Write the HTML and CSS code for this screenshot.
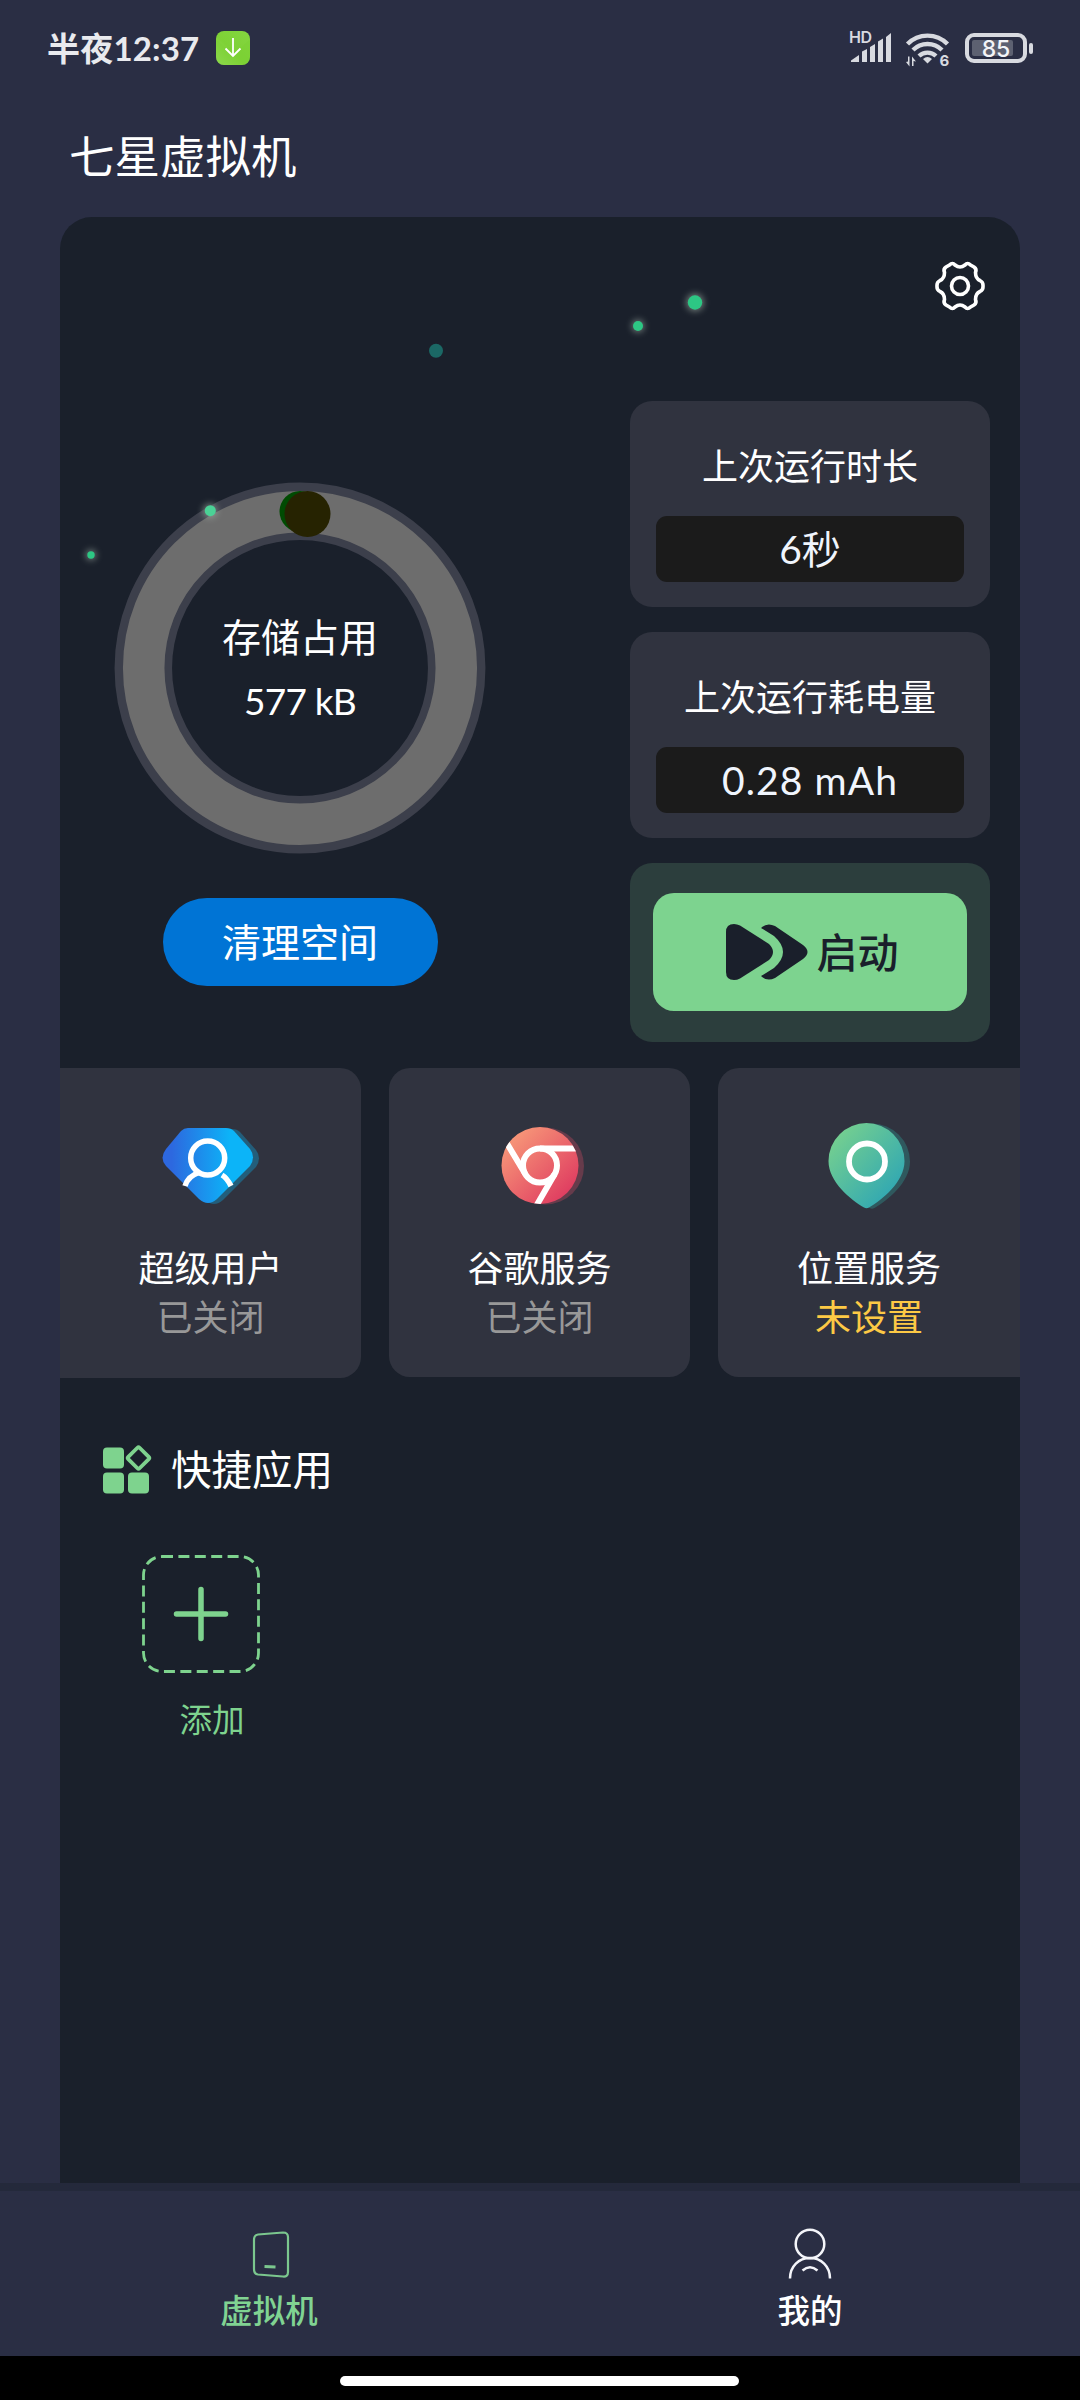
FILE: index.html
```html
<!DOCTYPE html>
<html lang="zh-CN">
<head>
<meta charset="utf-8">
<title>七星虚拟机</title>
<link rel="stylesheet" href="styles.css">
</head>
<body>
<div class="phone">
  <header class="status">
    <span class="clock">半夜12:37</span>
    <svg class="download" width="34" height="34" viewBox="0 0 34 34"><defs><linearGradient id="dl" x1="0" y1="1" x2="1" y2="0"><stop offset="0" stop-color="#9be061"/><stop offset=".45" stop-color="#7ed136"/><stop offset="1" stop-color="#84d640"/></linearGradient></defs><rect width="34" height="34" rx="8" fill="url(#dl)"/><path d="M0 8 17 24 34 8V26a8 8 0 0 1-8 8H8a8 8 0 0 1-8-8Z" fill="#7bd133" opacity=".45"/><path d="M17 7V25M9.500 17.500 17 25l7.500-7.500" fill="none" stroke="#fff" stroke-width="1.800"/></svg>
    <svg class="system" width="190" height="40" viewBox="0 0 190 40" fill="#d8dae0">
      <text x="4" y="15" class="hd" textLength="23">HD</text>
      <path d="M6 34h8v-7l-8 5.500ZM17 34h5V21l-5 2.500ZM25 34h5V16l-5 3ZM33 34h5V10.500l-5 3ZM41 34h5V5l-5 4Z"/>
      <g fill="none" stroke="#d8dae0" stroke-width="4.400"><path d="M62.500 16a28 28 0 0 1 40 0M68 22a20.500 20.500 0 0 1 29 0M74 28a12.500 12.500 0 0 1 17 0"/></g>
      <path d="M82.500 35.500l-4.500-4.500q4.500-4 9 0Z"/>
      <path d="M61 34l3.500 4.500V28.500h-1.500v5ZM71 33.500 67 28.500V38h1.500v-5Z"/>
      <text x="94.500" y="37.500" class="six">6</text>
      <rect x="122" y="7" width="58" height="26" rx="7" fill="none" stroke="#d8dae0" stroke-width="4"/>
      <rect x="127" y="12" width="41" height="16" rx="2" fill="#5d6171"/>
      <rect x="184" y="15" width="4" height="11" rx="2"/>
      <text x="151" y="29" text-anchor="middle" class="pct">85</text>
    </svg>
  </header>
  <h1 class="title">七星虚拟机</h1>

  <main class="panel">
    <svg class="stars" width="960" height="400" viewBox="60 217 960 400"><defs><filter id="glow" x="-150%" y="-150%" width="400%" height="400%"><feGaussianBlur stdDeviation="3.500"/></filter></defs>
      <g fill="#9aa79f" opacity=".75" filter="url(#glow)"><circle cx="695" cy="302.500" r="8.500"/><circle cx="638" cy="326" r="6"/><circle cx="210" cy="511" r="7"/><circle cx="91" cy="555" r="5"/></g>
      <g fill="#2dc784"><circle cx="695" cy="302.500" r="7.200"/><circle cx="638" cy="326" r="5"/><circle cx="210.300" cy="510.700" r="5.500" fill="#4bd196"/><circle cx="91" cy="555" r="3.700"/></g>
      <circle cx="436" cy="350.700" r="7" fill="#1b6865"/></svg>
    <div class="toolbar">
      <svg width="50" height="50" viewBox="-25 -25 50 50" fill="none" stroke="#fff" stroke-width="3.600" stroke-linejoin="round"><path d="M-10.500-21Q-7.500-24-5-21Q0-17 5-21Q7.500-24 10.500-21L14-19Q17-17 15.500-13.500Q15.500-7.500 20-5.500Q23-4 23-1V1Q23 4 20 5.500Q15.500 7.500 15.500 13.500Q17 17 14 19L10.500 21Q7.500 24 5 21Q0 17-5 21Q-7.500 24-10.500 21L-14 19Q-17 17-15.500 13.500Q-15.500 7.500-20 5.500Q-23 4-23 1V-1Q-23-4-20-5.500Q-15.500-7.500-15.500-13.500Q-17-17-14-19Z"/><circle r="8.500"/></svg>
    </div>
    <section class="overview">
      <div class="storage">
        <div class="gauge">
          <svg class="ring" width="372" height="372" viewBox="-186 -186 372 372"><circle r="156.700" fill="none" stroke="#3c3f4b" stroke-width="57.500"/><circle r="156.300" fill="none" stroke="#6d6d6d" stroke-width="41.500"/><circle cx="0" cy="-156.500" r="20.500" fill="#004b02"/><circle cx="7.500" cy="-154" r="23" fill="#262301"/></svg>
          <div class="gauge-label">存储占用</div>
          <div class="gauge-value">577 kB</div>
        </div>
        <button class="clean">清理空间</button>
      </div>
      <div class="stats">
        <div class="stat"><div class="stat-name">上次运行时长</div><div class="stat-value">6秒</div></div>
        <div class="stat"><div class="stat-name">上次运行耗电量</div><div class="stat-value energy">0.28 mAh</div></div>
        <div class="launch"><button class="start">
          <svg width="82" height="58" viewBox="0 0 82 58" fill="#1a1f2b"><path d="M0 9Q0 1 8 1Q11 1 14 2.500L43 21Q51 29 43 37L14 55.500Q11 57 8 57Q0 57 0 49Z"/><path d="M35 5Q41-1 49 3L77 22Q86 29 77 36L49 55Q41 59 35 53L48 45Q66 29 48 13Z"/></svg>
          <span>启动</span></button></div>
      </div>
    </section>
    <section class="services">
      <div class="service first">
        <svg width="98" height="90" viewBox="162 1121 98 90"><defs><linearGradient id="blue"><stop offset=".1" stop-color="#2d68df"/><stop offset=".75" stop-color="#0cb4f8"/></linearGradient><path id="gem" d="M188 1128H226Q231 1128 234 1131L250 1149Q256 1157 250 1166L217 1199Q208 1207 199 1199L166 1166Q159 1158 166 1149L181 1131Q184 1128 188 1128Z"/></defs><use href="#gem" x="6" y="1" fill="#235e7b"/><use href="#gem" fill="url(#blue)"/><g fill="none" stroke="#fff" stroke-width="5.500"><circle cx="207.700" cy="1158" r="17"/><path d="M185 1186Q188 1176 199 1172.500M222 1175Q227 1178 231 1186"/></g></svg>
        <div class="service-name">超级用户</div><div class="service-state">已关闭</div>
      </div>
      <div class="service">
        <svg width="90" height="90" viewBox="494.500 1121 90 90"><defs><linearGradient id="red" x2="1" y2="1"><stop offset=".1" stop-color="#f89a79"/><stop offset=".85" stop-color="#e03f61"/></linearGradient><clipPath id="disc"><circle cx="539.500" cy="1165.500" r="38.500"/></clipPath></defs><circle cx="545" cy="1166" r="38.500" fill="#663b4b"/><circle cx="539.500" cy="1165.500" r="38.500" fill="url(#red)"/><g fill="none" stroke="#fff" stroke-width="6" clip-path="url(#disc)"><circle cx="539.500" cy="1165.500" r="17"/><path d="M539.500 1148.500H580M524.800 1174 505 1141M554.200 1174 534 1209"/></g></svg>
        <div class="service-name">谷歌服务</div><div class="service-state">已关闭</div>
      </div>
      <div class="service last">
        <svg width="90" height="90" viewBox="824 1121 90 90"><defs><linearGradient id="green" x2="1" y2="1"><stop offset=".1" stop-color="#76d08f"/><stop offset=".8" stop-color="#35aab0"/></linearGradient><path id="pin" d="M866.500 1123A38 38 0 0 1 904.500 1161C904.500 1182 882 1200 869 1207.500Q866.500 1209 864 1207.500C851 1200 828.500 1182 828.500 1161A38 38 0 0 1 866.500 1123Z"/></defs><use href="#pin" x="5.500" y=".5" fill="#2f595e"/><use href="#pin" fill="url(#green)"/><circle cx="867" cy="1161.500" r="18" fill="none" stroke="#fff" stroke-width="5.800"/></svg>
        <div class="service-name">位置服务</div><div class="service-state unset">未设置</div>
      </div>
    </section>
    <section class="apps">
      <h2 class="apps-title"><svg width="49" height="50" viewBox="0 0 49 50" fill="#7ed38e"><rect y="2.500" width="21" height="21" rx="4"/><rect y="27.500" width="21" height="21" rx="4"/><rect x="25" y="27.500" width="21" height="21" rx="4"/><rect x="27.500" y="5" width="16" height="16" rx="1.500" transform="rotate(45 35.500 13)" fill="none" stroke="#7ed38e" stroke-width="3.800"/></svg><span>快捷应用</span></h2>
      <div class="add">
        <svg width="118" height="118" viewBox="0 0 118 118" fill="none" stroke="#7ed38e"><path d="M20 1.500H98A18.500 18.500 0 0 1 116.500 20V98A18.500 18.500 0 0 1 98 116.500H20A18.500 18.500 0 0 1 1.500 98V20A18.500 18.500 0 0 1 20 1.500Z" stroke-width="2.800" stroke-dasharray="11 5.400"/><path d="M34.500 59H83.500M59 34.500V83.500" stroke-width="5.500" stroke-linecap="round"/></svg>
        <div class="add-label">添加</div>
      </div>
    </section>
  </main>

  <nav class="nav">
    <div class="tab active"><svg width="50" height="54" viewBox="0 0 50 54" fill="none" stroke="#7bc78e" stroke-width="2.200"><path d="M13 6.500 38 4.500Q43 4.500 43 9V44Q43 49 38 48.500L13 46.500Q9 46 9 41V12Q9 7 13 6.500Z"/><path d="M19.500 38.500l11 .5" stroke-width="3"/></svg><span>虚拟机</span></div>
    <div class="tab"><svg width="50" height="54" viewBox="0 0 50 54" fill="none" stroke="#f4f5fa" stroke-width="2.500"><circle cx="25" cy="16" r="14.300"/><path d="M5 50.500C5 38 14 30 25 30S45 38 45 50.500M17.500 42.500Q25 36 32.500 42.500"/></svg><span>我的</span></div>
  </nav>
  <footer class="gesture"><div class="handle"></div></footer>
</div>
</body>
</html>
```

FILE: styles.css
```css
* { box-sizing: border-box; margin: 0; padding: 0; }
body { background: #2a2e44; }
svg { display: block; flex: none; }
button { border: 0; font: inherit; color: inherit; }
.phone { width: 1080px; height: 2400px; display: flex; flex-direction: column; background: #2a2e44; color: #fff; font-family: "Noto Sans CJK SC", sans-serif; font-weight: 400; overflow: hidden; }
.status { height: 96px; display: flex; align-items: center; padding: 0 45px 0 47px; }
.clock { font-size: 33px; line-height: 40px; color: #e9eaee; width: 169px; white-space: nowrap; font-family: Lato, "Noto Sans CJK SC", sans-serif; font-weight: 700; letter-spacing: .2px; }
.system { margin-left: auto; }
.hd { font: 600 16px Inter, sans-serif; }
.six { font: 700 15px Inter, sans-serif; }
.pct { font: 500 23px Inter, sans-serif; fill: #f3f4f7; }
.title { height: 121px; padding: 33px 0 0 69px; font-size: 45.5px; line-height: 50px; font-weight: 400; }
.panel { position: relative; flex: none; width: 960px; height: 1966px; margin-left: 60px; border-radius: 32px 32px 0 0; background: #1a202b; display: flex; flex-direction: column; }
.stars { position: absolute; left: 0; top: 0; z-index: 2; }
.toolbar { height: 184px; display: flex; justify-content: flex-end; padding: 44px 35px 0 0; }
.overview { display: flex; justify-content: space-between; height: 667px; padding: 0 30px 0 54px; }
.storage { width: 372px; padding-top: 81px; display: flex; flex-direction: column; align-items: center; }
.gauge { position: relative; width: 372px; height: 372px; display: flex; flex-direction: column; align-items: center; padding-top: 128px; }
.ring { position: absolute; left: 0; top: 0; }
.gauge-label { position: relative; font-size: 39px; line-height: 50px; }
.gauge-value { position: relative; font: 400 37px/50px Lato, sans-serif; margin-top: 16px; letter-spacing: -.8px; }
.clean { margin-top: 44px; width: 275px; height: 88px; padding-bottom: 3px; border-radius: 44px; background: #0074d5; font-size: 39px; line-height: 85px; }
.stats { width: 360px; display: flex; flex-direction: column; gap: 25px; }
.stat { height: 206px; border-radius: 22px; background: #30333f; padding: 38px 26px 0; text-align: center; }
.stat-name { font-size: 36px; line-height: 50px; }
.stat-value { margin-top: 27px; height: 66px; border-radius: 11px; background: #1b1b1b; color: #f0f5fd; font: 400 39px/66px Lato, "Noto Sans CJK SC", sans-serif; }
.energy { letter-spacing: 1.1px; }
.launch { height: 179px; border-radius: 22px; background: #2c3e3d; padding: 30px 23px; }
.start { width: 314px; height: 118px; padding-left: 4px; border-radius: 21px; background: #7dd38f; color: #1a1f2b; font-size: 41px; font-weight: 500; display: flex; align-items: center; justify-content: center; gap: 9px; }
.start span { line-height: 50px; padding-bottom: 4px; }
.services { display: flex; justify-content: space-between; }
.service { width: 301px; height: 309px; padding-top: 53px; border-radius: 21px; background: #30333f; display: flex; flex-direction: column; align-items: center; }
.service.first { height: 310px; border-radius: 0 21px 21px 0; }
.service.last { width: 302px; border-radius: 21px 0 0 21px; }
.service-name { margin-top: 30px; font-size: 36px; line-height: 50px; }
.service-state { font-size: 36px; line-height: 49px; color: #989898; }
.unset { color: #fdc945; }
.apps { padding: 67px 0 0 43px; }
.apps-title { display: flex; align-items: center; gap: 19px; height: 50px; font-size: 40.5px; font-weight: 400; }
.apps-title span { line-height: 50px; padding-bottom: 5px; }
.add { margin: 60px 0 0 39px; width: 140px; }
.add-label { margin-top: 20px; text-align: center; font-size: 32.5px; line-height: 50px; color: #7ed38e; }
.nav { height: 173px; flex: none; border-top: 8px solid #24293b; display: flex; background: #2a2e44; }
.tab { flex: 1; display: flex; flex-direction: column; align-items: center; padding-top: 37px; font-size: 32.500px; }
.tab span { line-height: 50px; margin-top: 2px; font-weight: 500; }
.active { color: #80d392; }
.active span { position: relative; left: -1px; }
.gesture { height: 44px; flex: none; background: #000; padding: 20px 0 0 340px; }
.handle { width: 399px; height: 10px; border-radius: 5px; background: #fff; }
```
